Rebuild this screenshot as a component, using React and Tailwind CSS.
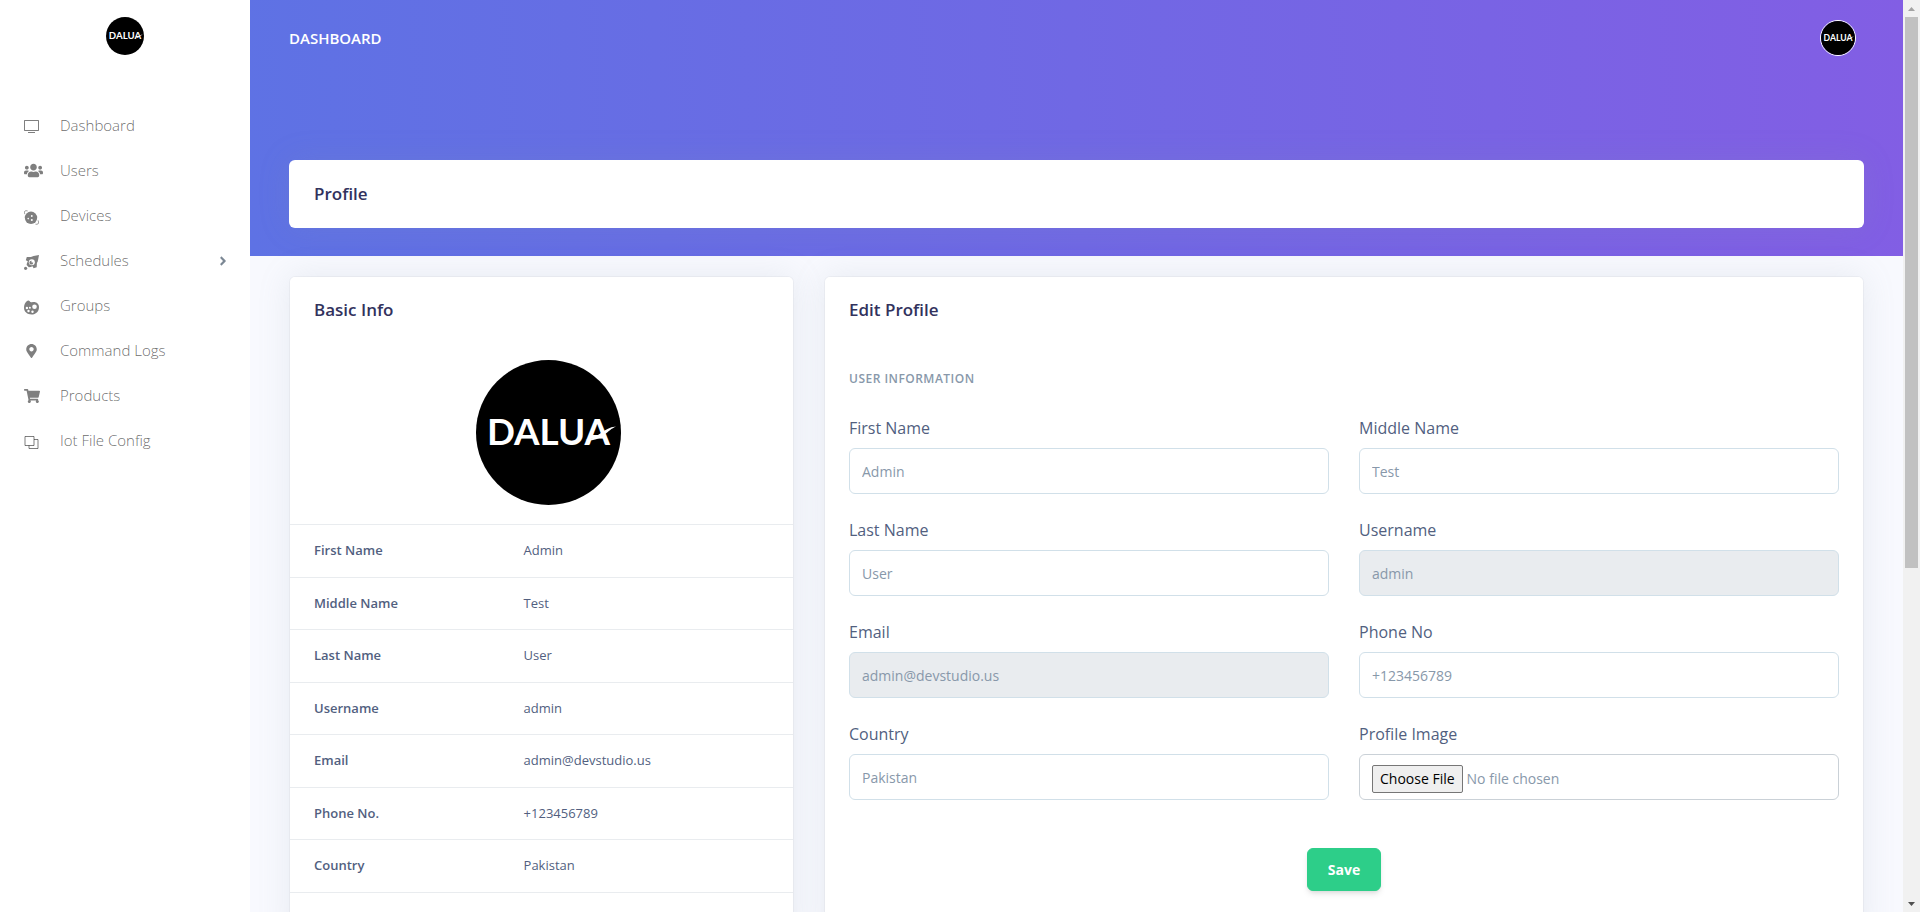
import { FaUsers, FaMapMarkerAlt, FaShoppingCart, FaAngleRight } from "react-icons/fa";

function TvIcon() {
  return (
    <svg width="15" height="15" viewBox="0 0 15 15" fill="none" stroke="currentColor" className="mt-0.5">
      <path d="M.5 1.5h14v10H.5zM4 13.500h7" />
    </svg>
  );
}

function PlanetIcon() {
  return (
    <svg width="15" height="15" viewBox="0 0 15 15" fill="none" className="mt-[3px]">
      <path d="M.9 4.200C-.2 1.600.6.300 3.600.9M14.100 10.400c1 2.800.4 4.200-2.600 3.800" stroke="currentColor" strokeWidth=".8" />
      <circle cx="7" cy="7.800" r="6.200" fill="currentColor" />
      <circle cx="4.200" cy="8.600" r=".8" fill="#fff" />
      <circle cx="7.800" cy="6" r=".9" fill="#fff" />
      <circle cx="7.800" cy="10" r="1" fill="#fff" />
    </svg>
  );
}

function SpaceshipIcon() {
  return (
    <svg width="15" height="15" viewBox="0 0 15 15" className="mt-[3px]">
      <path
        fill="currentColor"
        d="M15 0 9.600 1C8.600 1.200 7.800 1.500 7 2L2.800 2 1.800 5.200 3.800 6.200C3 7.600 2.700 8.800 2.600 10L4.800 12.200C6.200 12.100 7.400 11.900 8.600 11.300L9.500 13.200 12.700 12.200 12.900 8C13.500 7.200 13.900 6.200 14 5.200Z"
      />
      <circle cx="7.800" cy="7.200" r="3" fill="#fff" />
      <circle cx="7.300" cy="7.700" r="1.900" fill="currentColor" />
      <circle cx="8.300" cy="6.700" r=".9" fill="#fff" />
      <circle cx="1.600" cy="13.300" r="1.600" fill="currentColor" />
    </svg>
  );
}

function PaletteIcon() {
  return (
    <svg width="15" height="15" viewBox="0 0 15 15" className="mt-[3px]">
      <path
        fill="currentColor"
        d="M2.700 1.300C3.700.2 5.100.3 5.700 1.200 6.200 2.100 7 2.500 8 2.200 12 1.200 15 3.500 15 7.200 15 11.500 11.800 14.500 7.600 14.500 3.300 14.500 0 11.800 0 7.800 0 5 1 2.500 2.700 1.300Z"
      />
      <circle cx="10.500" cy="6.800" r="2.300" fill="#fff" />
      <circle cx="2.900" cy="8" r="1.200" fill="#fff" />
      <circle cx="5.900" cy="7.800" r="1" fill="#fff" />
      <circle cx="4.500" cy="11" r="1.200" fill="#fff" />
      <circle cx="8.500" cy="11.800" r="1.200" fill="#fff" />
    </svg>
  );
}

function CopyIcon() {
  return (
    <svg width="15" height="15" viewBox="0 0 15 15" fill="none" stroke="currentColor" className="mt-[3px]">
      <path d="M1 1.500h9v9H1zM10 4.500h4v9H5v-3" />
    </svg>
  );
}

function Brand({ className }) {
  return (
    <svg className={className} viewBox="0 0 146 146" role="img" aria-label="Dalua">
      <circle cx="73" cy="73" r="73" fill="#000" />
      <text x="73" y="86" textAnchor="middle" fill="#fff" className="font-['Lato',sans-serif] text-[37px] font-bold">
        DALUA
      </text>
      <path d="M110 80.500C122 80 128 68 141 67 131 71 127 83 110 80.500Z" fill="#fff" />
    </svg>
  );
}

const NAV = [
  { label: "Dashboard", icon: <TvIcon /> },
  { label: "Users", icon: <FaUsers size={19} /> },
  { label: "Devices", icon: <PlanetIcon /> },
  { label: "Schedules", icon: <SpaceshipIcon />, children: true },
  { label: "Groups", icon: <PaletteIcon /> },
  { label: "Command Logs", icon: <FaMapMarkerAlt size={14} className="w-[15px]" /> },
  { label: "Products", icon: <FaShoppingCart size={16} /> },
  { label: "Iot File Config", icon: <CopyIcon /> },
];

const INFO = [
  ["First Name", "Admin"],
  ["Middle Name", "Test"],
  ["Last Name", "User"],
  ["Username", "admin"],
  ["Email", "admin@devstudio.us"],
  ["Phone No.", "+123456789"],
  ["Country", "Pakistan"],
];

const FIELDS = [
  { id: "first", label: "First Name", value: "Admin" },
  { id: "middle", label: "Middle Name", value: "Test" },
  { id: "last", label: "Last Name", value: "User" },
  { id: "username", label: "Username", value: "admin", disabled: true },
  { id: "email", label: "Email", value: "admin@devstudio.us", disabled: true },
  { id: "phone", label: "Phone No", value: "+123456789" },
  { id: "country", label: "Country", value: "Pakistan" },
];

function Sidebar() {
  return (
    <aside className="w-[250px] shrink-0 bg-white">
      <a href="#home" className="flex justify-center pt-[17px]">
        <Brand className="size-[38px]" />
      </a>
      <nav className="mt-12 flex flex-col">
        {NAV.map((item) => (
          <a
            key={item.label}
            href={"#" + item.label.toLowerCase().replaceAll(" ", "-")}
            className="flex h-[45px] items-center pr-5 pl-6 text-[15px] font-light text-black/60"
          >
            <span className="flex w-9 shrink-0 items-center text-black/50">{item.icon}</span>
            <span className="grow">{item.label}</span>
            {item.children && <FaAngleRight size={14} className="text-[#7b8794]" />}
          </a>
        ))}
      </nav>
    </aside>
  );
}

function Card({ title, className = "", children }) {
  return (
    <section className={"rounded-md border-black/[0.03] bg-white bg-clip-padding shadow-[0_0_32px_0_rgba(136,152,170,0.15)] " + className}>
      <h3 className="px-6 py-5 text-[17px] leading-[26px] font-semibold text-[#32325d]">{title}</h3>
      {children}
    </section>
  );
}

function InfoTable() {
  return (
    <table className="w-full text-left text-[13px] leading-normal">
      <tbody>
        {INFO.map(([name, value]) => (
          <tr key={name} className="border-y border-[#e9ecef]">
            <th scope="row" className="w-5/12 px-6 py-4 font-semibold">{name}</th>
            <td className="px-6 py-4">{value}</td>
          </tr>
        ))}
      </tbody>
    </table>
  );
}

function ProfileForm() {
  return (
    <form className="px-6 pt-[27px] pb-12" onSubmit={(e) => e.preventDefault()}>
      <h6 className="mb-7 text-xs leading-[18px] font-semibold tracking-[0.04em] text-[#8898aa] uppercase">User information</h6>
      <div className="grid grid-cols-2 gap-x-[30px] gap-y-6">
        {FIELDS.map((f) => (
          <div key={f.id} className="flex flex-col gap-2">
            <label htmlFor={f.id} className="text-base">{f.label}</label>
            <input
              id={f.id}
              defaultValue={f.value}
              disabled={f.disabled}
              className="h-[46px] w-full rounded-md border border-[#d1e0e9] bg-white px-3 text-sm text-[#8898aa] disabled:bg-[#e9ecef]"
            />
          </div>
        ))}
        <div className="flex flex-col gap-2">
          <label htmlFor="image" className="text-base">Profile Image</label>
          <input
            id="image"
            type="file"
            className="h-[46px] w-full rounded-md border border-[#cad1d7] bg-white px-3 py-2.5 text-sm text-[#8898aa] file:mr-1 file:rounded-xs file:border file:border-solid file:border-[#767676] file:bg-[#efefef] file:px-[7px] file:py-[3px] file:font-normal file:text-black"
          />
        </div>
      </div>
      <div className="mt-12 flex justify-center">
        <button type="submit" className="rounded-md border border-[#2dce89] bg-[#2dce89] px-5 py-2.5 text-sm leading-[21px] font-bold text-white shadow-md">
          Save
        </button>
      </div>
    </form>
  );
}

function Scrollbar() {
  return (
    <div className="flex w-[17px] shrink-0 flex-col items-center bg-[#f1f1f1]" aria-hidden="true">
      <div className="flex h-[17px] items-center">
        <svg width="7" height="4" viewBox="0 0 7 4"><path d="M0 4 3.500 0 7 4Z" fill="#a3a3a3" /></svg>
      </div>
      <div className="h-[551px] w-[13px] bg-[#c1c1c1]" />
      <div className="mt-auto flex h-[17px] items-center">
        <svg width="7" height="4" viewBox="0 0 7 4"><path d="M0 0 3.500 4 7 0Z" fill="#505050" /></svg>
      </div>
    </div>
  );
}

export default function App() {
  return (
    <div className="flex h-screen overflow-hidden bg-white font-['Open_Sans','Noto_Sans',sans-serif] text-[#525f7f]">
      <Sidebar />
      <main className="min-w-0 grow overflow-hidden bg-[#f8f9fe]">
        <header className="bg-linear-[87deg,#5e72e4,#825ee4] px-[39px] pb-7">
          <div className="flex h-[76px] items-center justify-between">
            <a href="#dashboard" className="text-[15px] font-semibold text-white uppercase">Dashboard</a>
            <button type="button" aria-label="Account" className="mr-2 rounded-full border border-white">
              <Brand className="block size-[34px]" />
            </button>
          </div>
          <Card title="Profile" className="mt-[84px] p-px" />
        </header>
        <div className="flex gap-[30px] px-[39px] pt-5">
          <Card title="Basic Info" className="w-[505px] shrink-0 border">
            <div className="flex justify-center pt-[17px] pb-[19px] pl-[14px]">
              <Brand className="size-[145px]" />
            </div>
            <InfoTable />
          </Card>
          <Card title="Edit Profile" className="grow border">
            <ProfileForm />
          </Card>
        </div>
      </main>
      <Scrollbar />
    </div>
  );
}
